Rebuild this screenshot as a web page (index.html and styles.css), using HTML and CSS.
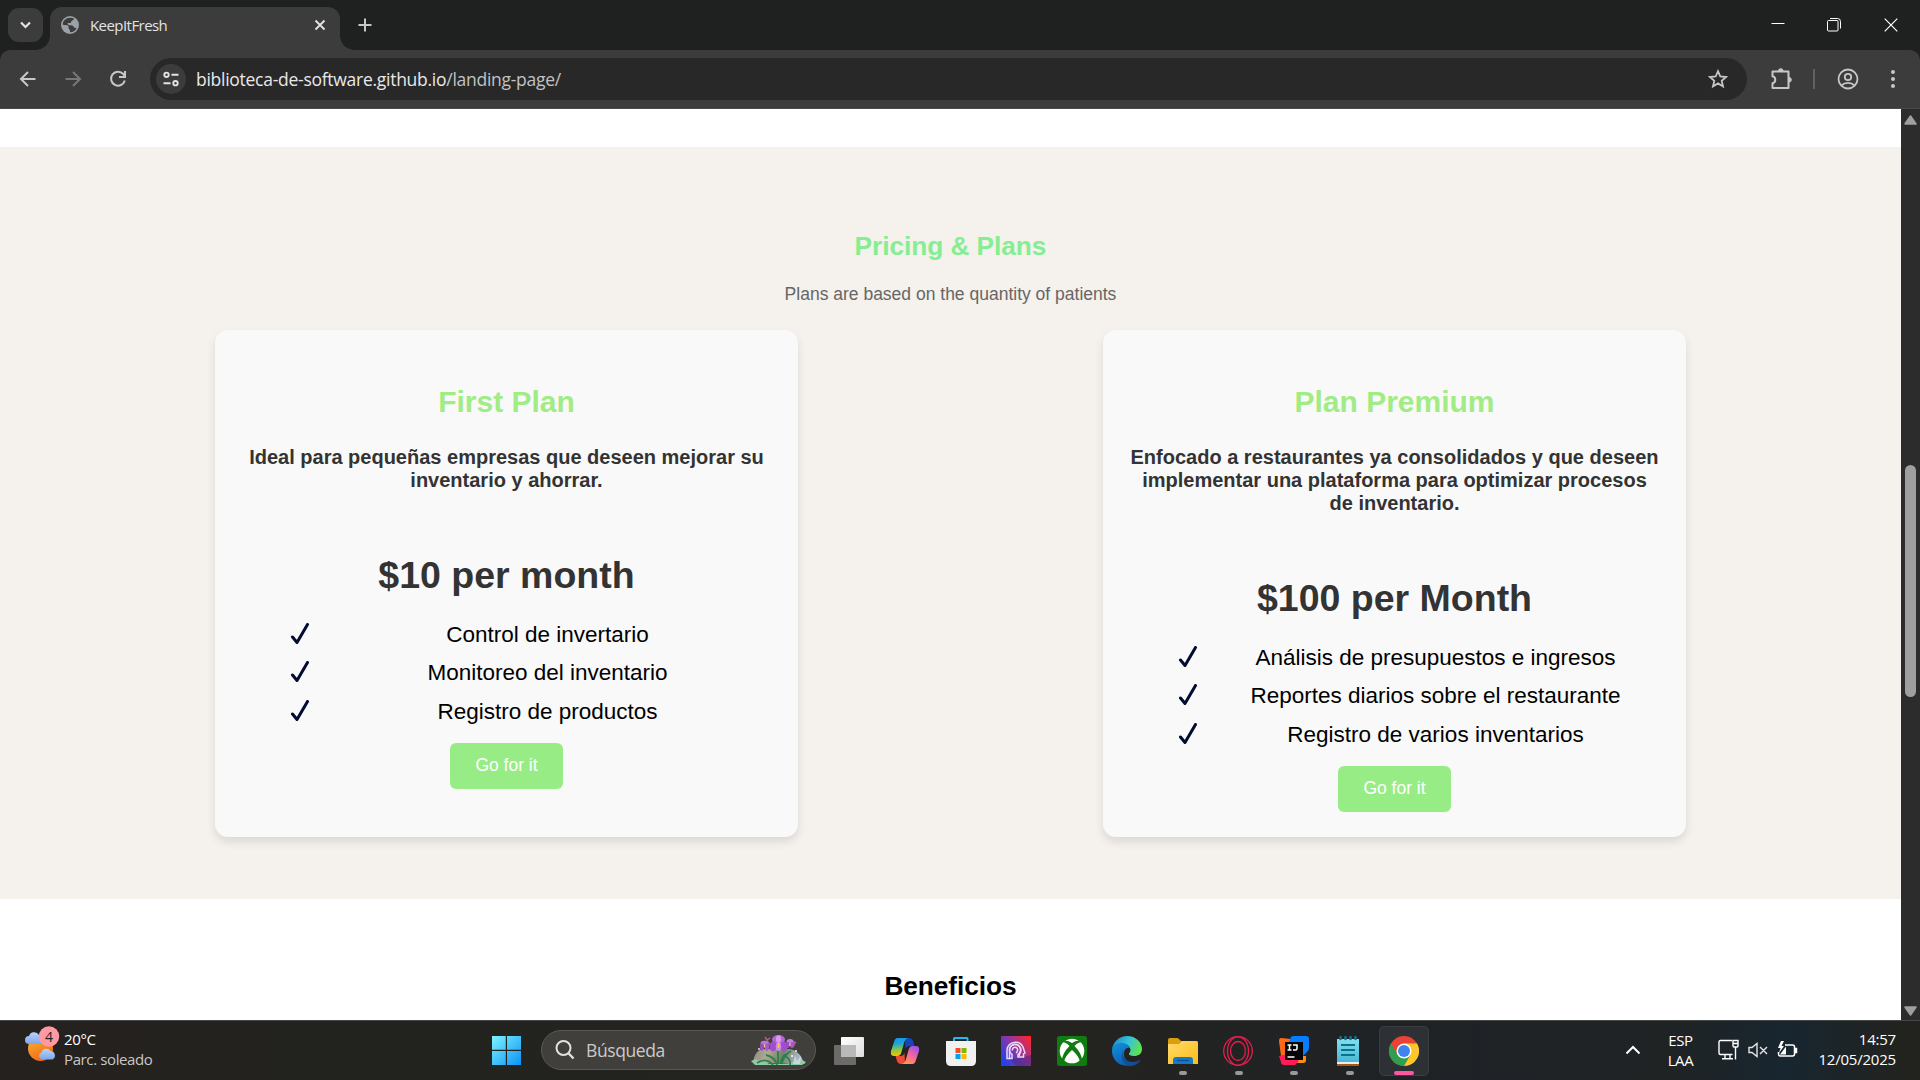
FILE: index.html
```html
<!DOCTYPE html>
<html lang="es">
<head>
<meta charset="utf-8">
<title>KeepItFresh</title>
<link rel="stylesheet" href="styles.css">
</head>
<body>
<header class="tabstrip">
  <div class="tab-search"><svg width="36" height="34" viewBox="0 0 36 34" fill="none" stroke="#e3e3e3" stroke-width="2.2"><path d="M13 14.500l4.500 4.500l4.500-4.500"/></svg></div>
  <div class="tab">
    <svg class="globe" width="18" height="18" viewBox="0 0 18 18"><circle cx="9" cy="9" r="9" fill="#9aa0a8"/><path d="M9.500 1.700C5 1.500 2 4.500 1.700 8.500c2 1 4.500.3 5.500 1.300.9 1-.2 2.200.8 3.200 1.200 1 1 1.800 1 3.300 2.500.2 5.300-1.500 6.500-4l-2.500-.8c-.5-1.500-1.500-2-3.200-2.200-2.200 0-3.300-.5-3.300-2.300h2.700c1.500 0 .3-2.200 2.300-2.600.9-.3 1.400-1 1.500-1.800A7 7 0 0 0 9.500 1.700z" fill="#3c3c3c"/></svg>
    <span class="tab-title">KeepItFresh</span>
    <svg width="12" height="12" viewBox="0 0 12 12" stroke="#e3e3e3" stroke-width="1.900"><path d="M1.500 1.500l9 9M10.500 1.500l-9 9"/></svg>
  </div>
  <svg class="plus" width="14" height="14" viewBox="0 0 14 14" stroke="#c7c7c7" stroke-width="2"><path d="M7 .5v13M.5 7h13"/></svg>
  <div class="window-buttons">
    <svg width="14" height="14" viewBox="0 0 14 14" stroke="#fff"><path d="M.5 5.500h13"/></svg>
    <svg width="14" height="14" viewBox="0 0 14 14" fill="none" stroke="#fff"><rect x=".5" y="2.500" width="10.500" height="10.500" rx="1"/><path d="M3 .5h7.500a3 3 0 0 1 3 3V10.500"/></svg>
    <svg width="14" height="14" viewBox="0 0 14 14" stroke="#fff" stroke-width="1.200"><path d="M.7.7l12.600 12.600M13.300.7L.7 13.300"/></svg>
  </div>
</header>
<nav class="toolbar">
  <svg width="20" height="20" viewBox="0 0 20 20" fill="none" stroke="#c7c7c7" stroke-width="2"><path d="M17.500 10H3.500M10 3L3 10l7 7"/></svg>
  <svg width="20" height="20" viewBox="0 0 20 20" fill="none" stroke="#777" stroke-width="2"><path d="M2.500 10h14M10 3l7 7-7 7"/></svg>
  <svg width="20" height="20" viewBox="0 0 20 20" fill="none" stroke="#c7c7c7" stroke-width="2"><path d="M16.800 11.500A7 7 0 1 1 15.300 5L17 7"/><path d="M17 2v6h-6"/></svg>
  <div class="omnibox">
    <div class="site-info"><svg width="18" height="18" viewBox="0 0 18 18" fill="none" stroke="#e3e3e3" stroke-width="1.900"><circle cx="4.500" cy="4.800" r="2.200"/><path d="M9.500 4.800h7M1.500 13.200h7"/><circle cx="13.500" cy="13.200" r="2.200"/></svg></div>
    <span class="url">biblioteca-de-software.github.io<span class="path">/landing-page/</span></span>
    <svg width="20" height="20" viewBox="0 0 20 20" fill="none" stroke="#c7c7c7" stroke-width="1.800"><path d="M10 2.200l2.300 5.300 5.800.5-4.400 3.800 1.300 5.600L10 14.400l-5 3 1.300-5.600L1.900 8l5.800-.5z"/></svg>
  </div>
  <svg class="puzzle" width="22" height="22" viewBox="0 0 22 22" fill="none" stroke="#c7c7c7" stroke-width="2" stroke-linejoin="round"><path d="M2.500 3.500h16v16.500H2.500v-4.700a3.600 3.600 0 0 0 0-7z"/><path d="M8.500 3a2.300 2.300 0 0 1 4.600 0zM19 9.500a2.300 2.300 0 0 1 0 4.600z" fill="#c7c7c7" stroke-width="1"/></svg>
  <span class="divider"></span>
  <svg class="profile" width="22" height="22" viewBox="0 0 22 22" fill="none" stroke="#c7c7c7" stroke-width="1.800"><circle cx="11" cy="11" r="9.500"/><circle cx="11" cy="9" r="3.200"/><path d="M4.500 17.500c3.500-3.500 9.500-3.500 13 0"/></svg>
  <svg class="menu" width="6" height="20" viewBox="0 0 6 20" fill="#c7c7c7"><circle cx="3" cy="3" r="2"/><circle cx="3" cy="10" r="2"/><circle cx="3" cy="17" r="2"/></svg>
</nav>

<div class="viewport">
  <main class="page">
    <section class="pricing">
      <h2>Pricing &amp; Plans</h2>
      <p class="lead">Plans are based on the quantity of patients</p>
      <div class="plans">
        <article class="card">
          <h3>First Plan</h3>
          <p class="desc">Ideal para pequeñas empresas que deseen mejorar su inventario y ahorrar.</p>
          <p class="price">$10 per month</p>
          <ul>
            <li><svg class="tick" viewBox="0 0 20 22"><path d="M2.500 14l4.500 5.500L17.500 1.500"/></svg><span>Control de invertario</span></li>
            <li><svg class="tick" viewBox="0 0 20 22"><path d="M2.500 14l4.500 5.500L17.500 1.500"/></svg><span>Monitoreo del inventario</span></li>
            <li><svg class="tick" viewBox="0 0 20 22"><path d="M2.500 14l4.500 5.500L17.500 1.500"/></svg><span>Registro de productos</span></li>
          </ul>
          <button class="go">Go for it</button>
        </article>
        <article class="card">
          <h3>Plan Premium</h3>
          <p class="desc">Enfocado a restaurantes ya consolidados y que deseen implementar una plataforma para optimizar procesos de inventario.</p>
          <p class="price">$100 per Month</p>
          <ul>
            <li><svg class="tick" viewBox="0 0 20 22"><path d="M2.500 14l4.500 5.500L17.500 1.500"/></svg><span>Análisis de presupuestos e ingresos</span></li>
            <li><svg class="tick" viewBox="0 0 20 22"><path d="M2.500 14l4.500 5.500L17.500 1.500"/></svg><span>Reportes diarios sobre el restaurante</span></li>
            <li><svg class="tick" viewBox="0 0 20 22"><path d="M2.500 14l4.500 5.500L17.500 1.500"/></svg><span>Registro de varios inventarios</span></li>
          </ul>
          <button class="go">Go for it</button>
        </article>
      </div>
    </section>
    <section class="benefits"><h2>Beneficios</h2></section>
  </main>
  <div class="scrollbar">
    <svg width="13" height="10" viewBox="0 0 13 10"><path d="M6.500 1.200L11.700 8.800H1.300z" fill="#9f9f9f" stroke="#9f9f9f" stroke-width="2" stroke-linejoin="round"/></svg>
    <span class="thumb"></span>
    <svg width="13" height="10" viewBox="0 0 13 10"><path d="M6.500 8.800L11.700 1.200H1.300z" fill="#9f9f9f" stroke="#9f9f9f" stroke-width="2" stroke-linejoin="round"/></svg>
  </div>
</div>

<footer class="taskbar">
  <div class="weather">
    <svg width="36" height="38" viewBox="0 0 36 38">
      <defs><linearGradient id="sun" x1="0" y1="0" x2=".5" y2="1"><stop offset="0" stop-color="#f6b73c"/><stop offset="1" stop-color="#f26b12"/></linearGradient>
      <linearGradient id="cloud" x1="0" y1="0" x2="0" y2="1"><stop offset="0" stop-color="#b9d4fb"/><stop offset="1" stop-color="#7fa4ea"/></linearGradient></defs>
      <circle cx="15.500" cy="22.500" r="12.500" fill="url(#sun)"/>
      <path d="M4 18a4 4 0 0 1 0-8 5.500 5.500 0 0 1 10-1q4 1 4 9z" fill="url(#cloud)"/>
      <path d="M16.500 33.500a3.700 3.700 0 0 1 0-7 5 5 0 0 1 9-1.500 4.500 4.500 0 0 1 2 8.500z" fill="url(#cloud)"/>
      <circle cx="24" cy="10.500" r="10.200" fill="#ff99a4"/>
      <text class="badge" x="24" y="15.500">4</text>
    </svg>
    <div class="weather-text"><span>20°C</span><span class="dim">Parc. soleado</span></div>
  </div>
  <svg class="start" width="29" height="29" viewBox="0 0 29 29"><defs><linearGradient id="win" x1="0" y1="0" x2="1" y2="1"><stop offset="0" stop-color="#7df3ff"/><stop offset="1" stop-color="#0a93f5"/></linearGradient></defs><path d="M0 0h13.800v13.800H0zM15 0h14v13.800H15zM0 15h13.800v14H0zM15 15h14v14H15z" fill="url(#win)"/></svg>
  <div class="search">
    <svg width="20" height="20" viewBox="0 0 20 20" fill="none" stroke="#e0e0de" stroke-width="2"><circle cx="8.500" cy="8" r="7"/><path d="M13.500 13.200l5 5.300" stroke-width="2.400"/></svg>
    <span>Búsqueda</span>
    <svg width="55" height="31" viewBox="0 0 55 31">
      <defs><linearGradient id="rock" x1="0" y1="0" x2="1" y2=".1"><stop offset="0" stop-color="#8d8c86"/><stop offset=".3" stop-color="#b0a793"/><stop offset=".6" stop-color="#77806c"/><stop offset="1" stop-color="#b5c3d2"/></linearGradient></defs>
      <path d="M2 28C3 20 6 15 12 14h26c8 1 12 6 14 12l2 3z" fill="url(#rock)"/>
      <path d="M0 26l5-2 4 3 4-1 5 3h18l6-2 5 1 4-3 4 2-4 3H4z" fill="#8fcaa5"/>
      <path d="M6 28c6-4 12-3 16 2M15 20q9 2 11 10M27 15v14M30 29Q30 20 37 19M34 21q6 3 5 9M40 16q-7 4-9 12" fill="none" stroke="#27824b" stroke-width="1.800"/>
      <path d="M19 10l-3-5M14 2l2 3 3-2M43 11v-4l2 1" fill="none" stroke="#b45d9f" stroke-width="1.400"/>
      <ellipse cx="27.500" cy="4.500" rx="6.500" ry="4.500" fill="#b565d5"/>
      <ellipse cx="27.500" cy="4" rx="2.600" ry="3.800" fill="#d99aec"/>
      <ellipse cx="22" cy="11.500" rx="3.400" ry="5" fill="#a04ecb"/><ellipse cx="33" cy="11.500" rx="3.400" ry="5" fill="#a04ecb"/>
      <ellipse cx="27.500" cy="11.500" rx="2.700" ry="4.500" fill="#cf87e8"/>
      <path d="M26.800 8h1.600v5h-1.600z" fill="#f2ce4a"/>
      <ellipse cx="13.500" cy="8.500" rx="4" ry="2.800" fill="#bf76dd"/><ellipse cx="11" cy="12" rx="2" ry="3.500" fill="#9a4bc6"/><ellipse cx="16" cy="12" rx="2.200" ry="3.800" fill="#a957d0"/>
      <ellipse cx="39" cy="6.500" rx="3.500" ry="2.500" fill="#c77fe1"/><ellipse cx="36.800" cy="10" rx="2" ry="3" fill="#9a4bc6"/><ellipse cx="41" cy="10" rx="2" ry="3" fill="#a957d0"/>
      <path d="M13 9.500h1.200v3H13zM38.300 8h1.200v3h-1.200z" fill="#edd070"/>
      <path d="M42 29l2-9 2 6 4-5-1 8z" fill="#d5e2ec" opacity=".7"/>
      <circle cx="8" cy="14" r="1" fill="#d9dde0"/><circle cx="45" cy="16" r="1" fill="#eef"/><circle cx="41" cy="21" r="1" fill="#fff"/>
    </svg>
  </div>
  <div class="apps">
    <div class="app"><svg viewBox="0 0 30 30"><defs><linearGradient id="tv" x1="0" y1="0" x2="1" y2="1"><stop offset="0" stop-color="#fff"/><stop offset="1" stop-color="#ddd"/></linearGradient></defs><rect x="7" y="1" width="23" height="20" rx="1" fill="url(#tv)"/><rect x="0" y="9" width="22" height="20" rx="1" fill="#6c6b6a"/><path d="M7 9h15v12H7z" fill="#b9b9b9"/></svg></div>
    <div class="app"><svg viewBox="0 0 30 30"><defs><linearGradient id="cpa" x1="0" y1="0" x2=".1" y2="1"><stop offset="0" stop-color="#1596ee"/><stop offset=".35" stop-color="#1ba5d8"/><stop offset=".65" stop-color="#7fc552"/><stop offset="1" stop-color="#f5c400"/></linearGradient><linearGradient id="cpb" x1=".8" y1="0" x2=".2" y2="1"><stop offset="0" stop-color="#9d4ff0"/><stop offset=".5" stop-color="#f2689a"/><stop offset="1" stop-color="#ff9a4e"/></linearGradient></defs>
      <path d="M15 2h4q3 0 4 3l1.500 5h-5q-3 0-4 3z" fill="#1746bb"/><path d="M15 28h-4q-3 0-4-3l-1.500-5h5q3 0 4-3z" fill="#ee4b36"/>
      <path d="M7.500 2H18q-3 1-4 5l-2.500 9q-1 4-4 4H4q-4 0-3-5L4 6q1-4 3.500-4z" fill="url(#cpa)"/><path d="M22.500 28H12q3-1 4-5l2.500-9q1-4 4-4H26q4 0 3 5l-3 9q-1 4-3.500 4z" fill="url(#cpb)"/></svg></div>
    <div class="app"><svg viewBox="0 0 30 30"><path d="M8 7V2.500Q8 2 8.500 2H21q.5 0 .5.500V7" fill="none" stroke="#25b8ef" stroke-width="2"/><path d="M0 5h30v20q0 5-5 5H5q-5 0-5-5z" fill="#f1f1f1"/><path d="M9.500 12h5v5h-5z" fill="#f25022"/><path d="M15.500 12h5v5h-5z" fill="#7fba00"/><path d="M9.500 18h5v5h-5z" fill="#00a4ef"/><path d="M15.500 18h5v5h-5z" fill="#ffb900"/></svg></div>
    <div class="app"><svg viewBox="0 0 30 30"><defs><linearGradient id="cc" x1="0" y1=".8" x2="1" y2=".1"><stop offset="0" stop-color="#1e42ee"/><stop offset=".5" stop-color="#8b37a5"/><stop offset="1" stop-color="#fb2530"/></linearGradient></defs><path d="M0 0h30v30H0z" fill="url(#cc)"/><path d="M9 23l6 7h15V19l-7 2z" fill="#3d2478" opacity=".45"/><g fill="none" stroke="#efd8f3" stroke-width="1.500"><path d="M6 22.500V14a8.500 8.500 0 0 1 16-3l2 6-1.500 1v3h-5.500v-2.500a5.500 5.500 0 1 0-6 0v4z"/><path d="M8.500 22v-8a5.700 5.700 0 0 1 11.400 0q0 2.500-1.500 4v2M11.500 14.500a2.600 2.600 0 1 1 5 0q0 1.500-1.500 2.500"/></g></svg></div>
    <div class="app"><svg viewBox="0 0 30 30"><rect width="30" height="30" rx="2.500" fill="#107c10"/><circle cx="15" cy="15" r="12.300" fill="#fff"/><path d="M7 4.500Q11 4 15 7q4-3 8-2.500l2 2Q22 5.500 17.500 10q7 7 7.500 14l-2 2q-1-6-8-12-7 6-8 12l-2-2q.5-7 7.500-14Q8 5.500 5 6.500z" fill="#107c10"/></svg></div>
    <div class="app"><svg viewBox="0 0 30 30"><defs><linearGradient id="ea" x1="0" y1=".2" x2="1" y2=".5"><stop offset="0" stop-color="#168bd0"/><stop offset=".55" stop-color="#36c5d4"/><stop offset="1" stop-color="#62e34c"/></linearGradient><linearGradient id="eb" x1="0" y1="0" x2=".6" y2="1"><stop offset="0" stop-color="#1193df"/><stop offset="1" stop-color="#0f5cae"/></linearGradient></defs><path d="M0 14C1 5 8 0 15 0c9 0 15 6.500 15 13 0 5-4 7-7.500 7-4 0-6-1-5.500-2.500 2-2 2-5 0-7C13 7 3 7 0 14z" fill="url(#ea)"/><path d="M0 15C0 9 5 7 9.500 7c5 0 8 2.500 8.500 5-4-1-6.500 3-6 7 .5 5 5 9 9 9.500-2 1-4.500 1.500-7 1.300C6 29.300 0 23 0 15z" fill="url(#eb)"/><path d="M12 14c-4 7 3 12.500 9 12 3 0 5-1 6.500-2 .7-.3 1 .2.500 1-2.500 3.500-6 5-10 5C11 29 7 21 12 14z" fill="#124f96"/></svg></div>
    <div class="app running"><svg viewBox="0 0 30 30"><defs><linearGradient id="fo" x1="0" y1="0" x2="1" y2="1"><stop offset="0" stop-color="#ffdb68"/><stop offset="1" stop-color="#fbbd1c"/></linearGradient></defs><path d="M0 4q0-2 2-2h7q1 0 2 1l2 2h15q2 0 2 2v5H0z" fill="#dc9d0e"/><path d="M0 8h11l3-3h14q2 0 2 2v21H0z" fill="url(#fo)"/><path d="M5 28v-4q0-3 3-3h14q3 0 3 3v4z" fill="#1679c8"/><path d="M9 24.500h12" stroke="#0a4f91" stroke-width="1.300"/></svg></div>
    <div class="app running"><svg viewBox="0 0 30 30" fill="none" stroke="#e61e4d" stroke-width="1.300"><circle cx="15" cy="15" r="14.300"/><ellipse cx="15" cy="15" rx="10.500" ry="14.200"/><ellipse cx="15" cy="15" rx="7.500" ry="9.500"/><path d="M18 6c6 4 6 14 0 18" stroke="#ad2144"/></svg></div>
    <div class="app running"><svg viewBox="0 0 30 30"><path d="M0 5q0-3 2-3l10 1-3 22-7-5z" fill="#ff6a18"/><path d="M13 20h14v4q0 3-3 3H13z" fill="#ff8b14"/><path d="M12 1q1-1 3-1h12q3 0 3 3v9q0 2-2 4l-4 4-14-14z" fill="#087cff"/><path d="M0 20l12-3 8 8-4 4H5q-3 0-3-3z" fill="#ff1c57"/><path d="M6 6h18v18H6z" fill="#050505"/><path d="M8.500 9h4M10.500 9v5M8.500 14h4M14 9h4v3.500q0 1.500-1.500 1.500H14M8.500 21h7" fill="none" stroke="#fff" stroke-width="1.500"/></svg></div>
    <div class="app running"><svg viewBox="0 0 30 30"><defs><linearGradient id="np" x1="0" y1="0" x2="0" y2="1"><stop offset="0" stop-color="#83e0ee"/><stop offset="1" stop-color="#4bb5d6"/></linearGradient></defs><path d="M4 26h22v4H4z" fill="#a95719"/><path d="M4 25h22v3H4z" fill="#e9edf0"/><path d="M4 3h22v23H4z" fill="url(#np)"/><path d="M8 9h14M8 14h14M8 19h14" stroke="#08728f" stroke-width="2"/><path d="M7.500 1v2M12.500 1v2M17.500 1v2M22.500 1v2" stroke="#126f8c" stroke-width="2.600" stroke-linecap="round"/></svg></div>
    <div class="app running active"><svg viewBox="0 0 30 30"><circle cx="15" cy="15" r="15" fill="#ea4335"/><path d="M2 7.500A15 15 0 0 0 15 30l6.500-11.200L8.500 18.700z" fill="#2f9e4f"/><path d="M15 30A15 15 0 0 0 28 7.500H15l6.500 11.300z" fill="#fbc82c"/><circle cx="15" cy="15" r="7.500" fill="#fff"/><circle cx="15" cy="15" r="6" fill="#3f83ed"/></svg></div>
  </div>
  <svg class="chevron" width="16" height="10" viewBox="0 0 16 10" fill="none" stroke="#fff" stroke-width="2"><path d="M1.500 8.500L8 2l6.500 6.500"/></svg>
  <div class="lang"><span>ESP</span><span>LAA</span></div>
  <div class="status">
    <svg width="21" height="21" viewBox="0 0 21 21" fill="none" stroke="#fff" stroke-width="1.400"><path d="M14 1.500H2.500q-1.500 0-1.500 1.500v11q0 1.500 1.500 1.500h12M7 16v3.500M12 16v3.500M4 19.700h11M15 1.500h5v5.500q0 1-1 1h-3q-1 0-1-1zM15 4.500h5M17.500 8v12.500"/></svg>
    <svg width="20" height="16" viewBox="0 0 20 16" fill="none" stroke="#e5e5e5" stroke-width="1.400"><path d="M1 5.500h3L9 1.500v13L4 10.500H1zM12 5l7 7M19 5l-7 7"/></svg>
    <svg width="21" height="18" viewBox="0 0 21 18" fill="none" stroke="#fff" stroke-width="1.500"><path d="M8 4h7.500q2 0 2 2v7q0 2-2 2h-12q-2 0-2-2v-2"/><path d="M18 7.500h1.500v4H18z" fill="#fff"/><path d="M4 0L1 7h2.500L2 12l5-7H4.500L7 0zM3 13.500l6-8v8z" fill="#fff" stroke="none"/></svg>
  </div>
  <div class="clock"><span>14:57</span><span>12/05/2025</span></div>
</footer>
</body>
</html>
```
FILE: styles.css
```css
* { box-sizing: border-box; }
body { margin: 0; width: 1920px; height: 1080px; overflow: hidden; display: flex; flex-direction: column; background: #1f2020; font-family: "Liberation Sans", Arial, sans-serif; }
svg { display: block; flex: none; }
h2, h3, p, ul { margin: 0; padding: 0; }

/* Browser tabs */
.tabstrip { height: 50px; flex: none; display: flex; align-items: center; background: #1f2120; font-family: "Open Sans", "Noto Sans", sans-serif; }
.tab-search { width: 35px; height: 34px; margin-left: 8px; border-radius: 11px; background: #3c3c3c; }
.tab { position: relative; width: 290px; height: 43px; margin: 7px 0 0 7px; padding: 0 14px 7px 11px; display: flex; align-items: center; background: #3c3c3c; border-radius: 12px 12px 0 0; }
.tab::before, .tab::after { content: ""; position: absolute; bottom: 0; width: 14px; height: 14px; }
.tab::before { left: -14px; background: radial-gradient(circle at 0 0, transparent 13.500px, #3c3c3c 14px); }
.tab::after { right: -14px; background: radial-gradient(circle at 100% 0, transparent 13.500px, #3c3c3c 14px); }
.tab-title { flex: 1; margin-left: 11px; color: #e3e3e3; font-size: 15px; line-height: 20px; letter-spacing: -.56px; }
.plus { margin-left: 18px; }
.window-buttons { margin: 0 22px 0 auto; display: flex; gap: 43px; }
.window-buttons svg:first-child { margin-right: -1px; }

/* Address bar */
.toolbar { height: 59px; flex: none; display: flex; align-items: center; padding: 0 24px 1px 18px; background: #3c3c3c; border-bottom: 1px solid #4b4848; border-radius: 10px 10px 0 0; font-family: "Open Sans", "Noto Sans", sans-serif; }
.toolbar > svg + svg { margin-left: 25px; }
.omnibox { width: 1597px; height: 42px; margin-left: 22px; padding: 0 19px 0 6px; display: flex; align-items: center; border-radius: 21px; background: #282828; }
.site-info { width: 30px; height: 30px; border-radius: 50%; background: #3c3c3c; display: grid; place-items: center; }
.url { flex: 1; margin-left: 10px; color: #e8e8e8; font-size: 17.500px; line-height: 24px; letter-spacing: -.27px; }
.path { color: #c2c2c2; }
.toolbar > .puzzle { margin-left: 23px; }
.divider { width: 2px; height: 20px; margin-left: 21px; background: #606060; }
.toolbar > .profile { margin-left: 22px; }
.toolbar > .menu { margin-left: auto; }

/* Page */
.viewport { height: 911px; flex: none; display: flex; background: #fff; }
.page { flex: 1; padding-top: 38px; }
.pricing { height: 752px; padding: 84px 215px 0; background: #f5f1ec; text-align: center; }
.pricing h2 { color: #86ee92; font-size: 26.250px; line-height: 30px; letter-spacing: -.05px; }
.lead { margin-top: 23px; color: #666; font-size: 17.500px; line-height: 20px; }
.plans { display: flex; justify-content: space-between; margin-top: 26px; }
.card { width: 583px; height: 507px; padding: 55px 25px 25px; border-radius: 13px; background: #f9f9f9; box-shadow: 0 5px 10px rgba(0, 0, 0, .1); }
.card h3 { color: #a1ec85; font-size: 30px; line-height: 34px; }
.desc { margin-top: 27px; color: #333; font-weight: bold; font-size: 20px; line-height: 23px; }
.price { margin-top: 62px; color: #333; font-weight: bold; font-size: 37.500px; line-height: 43px; }
.card ul { margin-top: 25px; padding-left: 50px; list-style: none; display: flex; flex-direction: column; gap: 12.400px; }
.card li { display: flex; font-size: 22.500px; line-height: 26px; color: #000; }
.card li span { flex: 1; }
.tick { width: 20px; height: 22px; margin: 1px 12px 0 0; fill: none; stroke: #020b30; stroke-width: 3; stroke-linecap: round; stroke-linejoin: round; }
.go { display: block; width: 113px; height: 46px; margin: 18px auto 0; padding: 0 0 1px; border: 0; border-radius: 6px; background: #98ec86; color: #fff; font: 17.500px/20px "Liberation Sans", Arial, sans-serif; }
.benefits { padding-top: 72px; text-align: center; }
.benefits h2 { color: #000; font-size: 26.250px; line-height: 30px; letter-spacing: -.05px; }
.scrollbar { width: 19px; display: flex; flex-direction: column; align-items: center; padding: 6px 0 4px; background: #2c2c2c; }
.thumb { width: 11px; height: 232px; margin: 340px 0 auto; border-radius: 6px; background: #9f9f9f; }

/* Taskbar */
.taskbar { flex: 1; display: flex; align-items: center; border-top: 1px solid #454646; background: linear-gradient(90deg, #25211e 0, #22231f 20%, #242320 55%, #1e2226 77%, #202324 87%, #182630 93%, #22231f 99%); color: #fff; font-family: "Open Sans", "Noto Sans", sans-serif; font-size: 15px; line-height: 20px; }
.weather { width: 492px; flex: none; padding: 0 0 4px 25px; display: flex; }
.weather-text { display: flex; flex-direction: column; margin: 0 0 0 3px; letter-spacing: -.38px; }
.weather svg { margin-top: -3px; }
.dim { color: #c8c8c6; }
.badge { font-size: 14px; text-anchor: middle; fill: #222; }
.search { width: 275px; height: 40px; margin: 0 0 1px 20px; padding: 0 9px 0 13px; display: flex; align-items: center; border: 1px solid #595855; border-radius: 20px; background: #403f3c; color: #cacac8; font-size: 17.500px; }
.search span { flex: 1; margin-left: 11px; letter-spacing: -.4px; }
.apps { display: flex; margin-left: 5px; }
.app { position: relative; width: 55.500px; height: 50px; display: grid; place-items: center; }
.app svg { position: relative; width: 30px; height: 30px; }
.app:nth-child(n+2):nth-child(-n+9) svg { margin-left: 2px; }
.running::after { content: ""; position: absolute; left: 25px; bottom: 1px; width: 8px; height: 4px; border-radius: 2px; background: #999; }
.active::before { content: ""; position: absolute; inset: 0 2.750px; border: 1px solid #3a3d41; border-radius: 5px; background: #2d3034; }
.active::after { left: 18px; width: 20px; background: #ff579f; }
.chevron { margin: 0 0 1px 193px; }
.lang, .clock { display: flex; flex-direction: column; margin-bottom: 2px; }
.lang { width: 40px; margin-left: 20px; text-align: center; letter-spacing: -.4px; }
.status { display: flex; align-items: center; margin: 0 0 2px 17px; gap: 9px; }
.clock { margin: 0 24px 3px auto; text-align: right; letter-spacing: -.2px; }
```
